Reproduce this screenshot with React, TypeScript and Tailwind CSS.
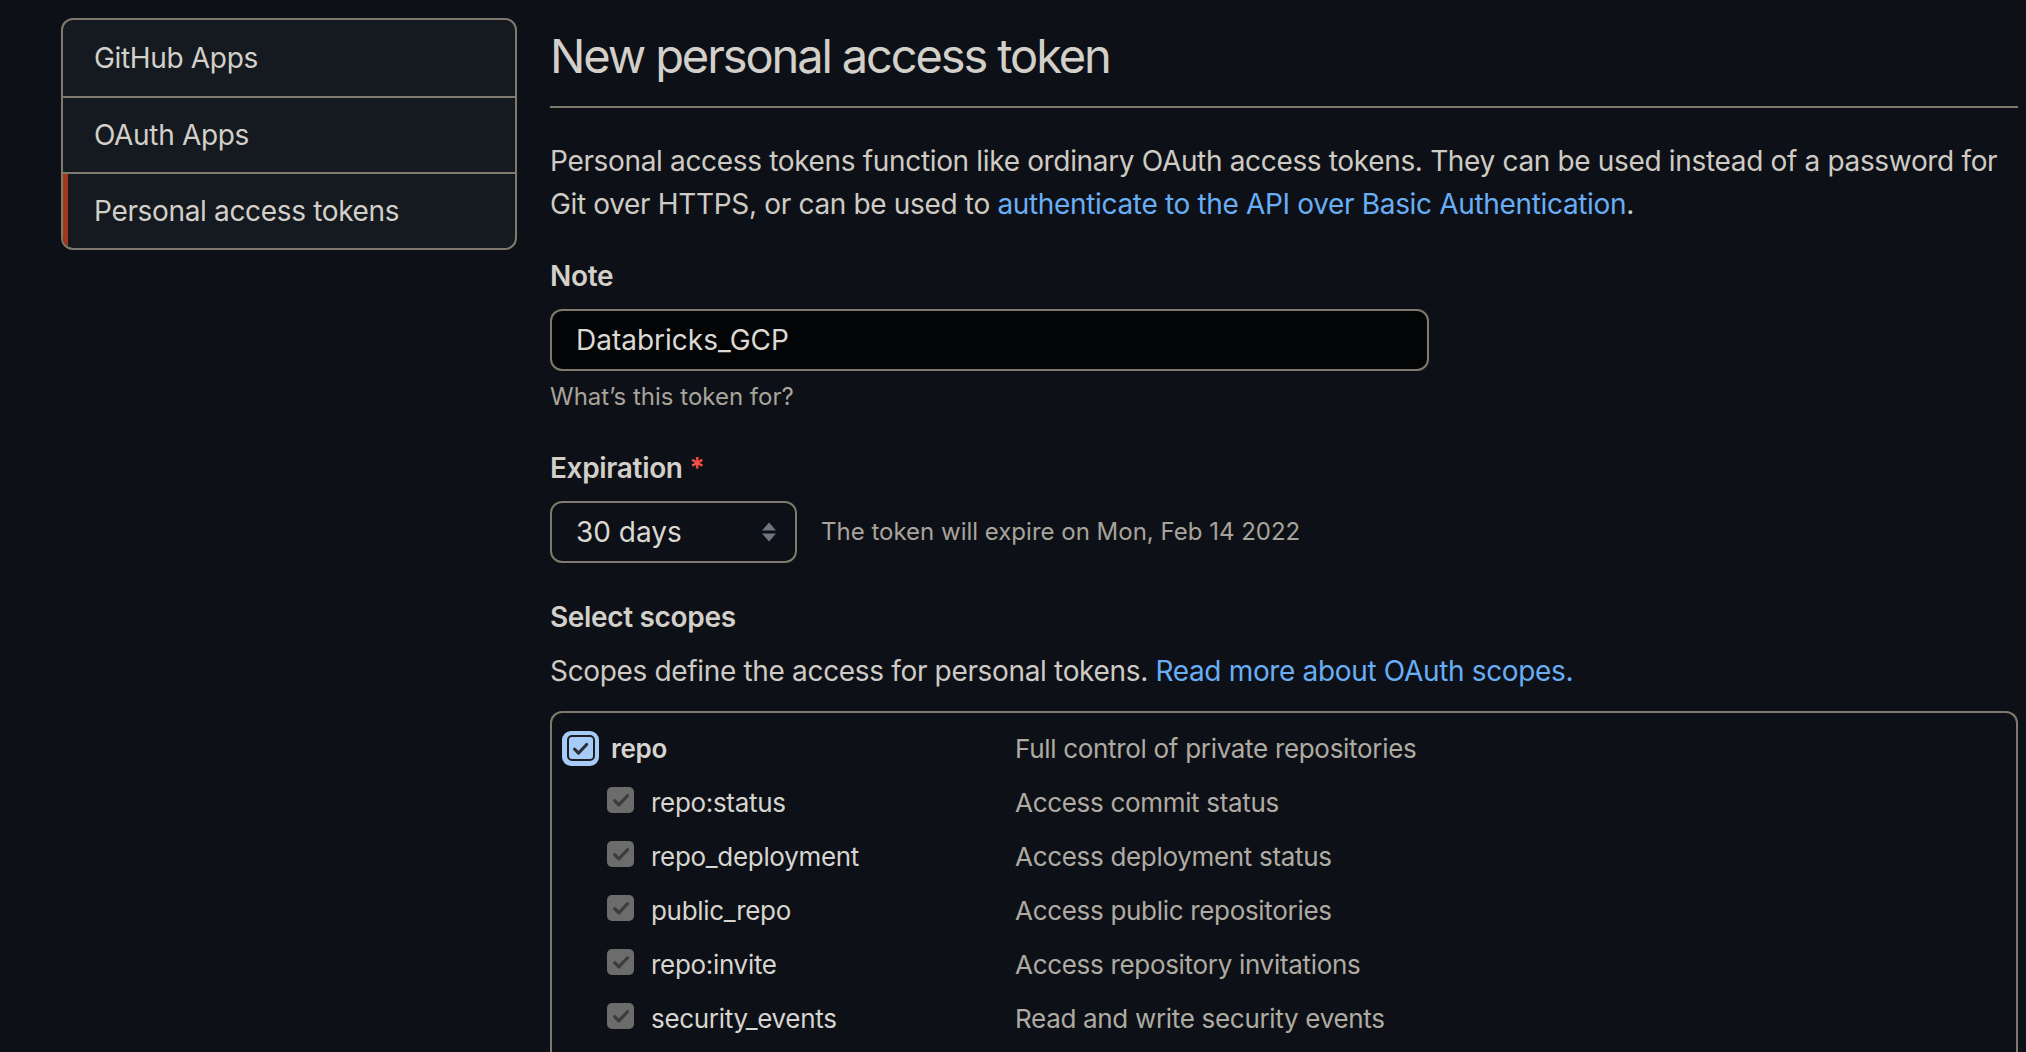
import React from "react";

const sideItems = [
    { label: "GitHub Apps", active: false },
    { label: "OAuth Apps", active: false },
    { label: "Personal access tokens", active: true },
];

const subScopes = [
    { name: "repo:status", desc: "Access commit status" },
    { name: "repo_deployment", desc: "Access deployment status" },
    { name: "public_repo", desc: "Access public repositories" },
    { name: "repo:invite", desc: "Access repository invitations" },
    { name: "security_events", desc: "Read and write security events" },
];

function Check({ color, size }: { color: string; size: number }) {
    return (
        <svg width={size} height={size} viewBox="0 0 16 16" fill="none">
            <path d="M3 8.6l3.3 3.3L13.2 4.6" stroke={color} strokeWidth="2.6" strokeLinecap="round" strokeLinejoin="round" />
        </svg>
    );
}

export default function App() {
    return (
        <div
            className="w-[2026px] h-[1052px] overflow-hidden bg-[#0d1117] text-[#cfcbc4] flex items-start gap-[33px] pl-[61px] pt-[18px]"
            style={{ fontFamily: "Inter, 'Noto Sans', sans-serif" }}
        >
            {/* sidebar */}
            <nav className="w-[456px] shrink-0 rounded-[12px] border-2 border-[#807a6e] bg-[#151a21] overflow-hidden">
                {sideItems.map((item, i) => (
                    <div
                        key={item.label}
                        className={
                            "relative h-[76px] flex items-center pl-[31px] text-[28px] tracking-[-0.012em] text-[#d3cfc9] " +
                            (i > 0 ? "border-t-2 border-[#807a6e]" : "")
                        }
                    >
                        {item.active && <span className="absolute left-0 top-0 bottom-0 w-[5px] bg-[#a2381a]" />}
                        {item.label}
                    </div>
                ))}
            </nav>

            {/* main */}
            <main className="w-[1468px] shrink-0">
                <div className="mt-[8px] pb-[20px] border-b-2 border-[#807a6e]">
                    <h1 className="text-[47px] leading-[60px] font-normal tracking-[-0.045em] text-[#d3cfc9]">
                        New personal access token
                    </h1>
                </div>

                <p className="mt-[32px] text-[28px] leading-[43px] tracking-[-0.012em] whitespace-nowrap">
                    Personal access tokens function like ordinary OAuth access tokens. They can be used instead of a password for
                    <br />
                    Git over HTTPS, or can be used to{" "}
                    <a className="text-[#69aef5]">authenticate to the API over Basic Authentication</a>.
                </p>

                <div className="mt-[29px] text-[28px] leading-[42px] font-semibold tracking-[-0.012em] text-[#d3cfc9]">Note</div>
                <div className="mt-[12px] w-[879px] h-[62px] rounded-[12px] border-2 border-[#807a6e] bg-[#030406] flex items-center pl-[24px] text-[28px] text-[#dcd9d4]">
                    Databricks_GCP
                </div>
                <div className="mt-[8px] text-[24px] leading-[36px] text-[#a9a49b]">What’s this token for?</div>

                <div className="mt-[32px] text-[28px] leading-[42px] font-semibold tracking-[-0.012em] text-[#d3cfc9]">
                    Expiration <span className="text-[#f85149]">*</span>
                </div>
                <div className="mt-[12px] flex items-center gap-[24px]">
                    <div className="w-[247px] h-[62px] rounded-[12px] border-2 border-[#807a6e] bg-[#0d1117] flex items-center justify-between pl-[24px] pr-[18px] text-[28px] text-[#dcd9d4]">
                        <span>30 days</span>
                        <svg width="16" height="24" viewBox="0 0 16 24">
                            <path d="M8 2.5L15 10.5H1z" fill="#6e7681" />
                            <path d="M1 13.5H15L8 21.5z" fill="#6e7681" />
                        </svg>
                    </div>
                    <span className="text-[24px] text-[#a9a49b]">The token will expire on Mon, Feb 14 2022</span>
                </div>

                <div className="mt-[33px] text-[28px] leading-[42px] font-semibold tracking-[-0.012em] text-[#d3cfc9]">Select scopes</div>
                <p className="mt-[12px] text-[28px] leading-[42px] tracking-[-0.012em]">
                    Scopes define the access for personal tokens. <a className="text-[#69aef5]">Read more about OAuth scopes.</a>
                </p>

                <div className="mt-[19px] rounded-t-[12px] border-2 border-b-0 border-[#807a6e] pt-[8px] pl-[10px] h-[400px]">
                    <div className="h-[54px] flex items-center">
                        <div className="w-[453px] flex items-center gap-[12px]">
                            <span className="w-[37px] h-[35px] rounded-[9px] bg-[#a6cbf7] flex items-center justify-center">
                                <span className="w-[28px] h-[26px] rounded-[5px] border-2 border-[#1b1f24] bg-[#a6cbf7] flex items-center justify-center">
                                    <Check color="#2b3036" size={19} />
                                </span>
                            </span>
                            <span className="text-[26px] font-semibold tracking-[-0.012em] text-[#d8d5d0]">repo</span>
                        </div>
                        <span className="text-[26px] tracking-[-0.012em] text-[#b0aba2]">Full control of private repositories</span>
                    </div>
                    {subScopes.map((s) => (
                        <div key={s.name} className="h-[54px] flex items-center">
                            <div className="w-[453px] flex items-center gap-[17px] pl-[45px]">
                                <span className="w-[27px] h-[26px] -mt-[4px] rounded-[5px] bg-[#6c6c6c] flex items-center justify-center">
                                    <Check color="#3c3c3c" size={20} />
                                </span>
                                <span className="text-[26px] tracking-[-0.012em] text-[#d8d5d0]">{s.name}</span>
                            </div>
                            <span className="text-[26px] tracking-[-0.012em] text-[#b0aba2]">{s.desc}</span>
                        </div>
                    ))}
                </div>
            </main>
        </div>
    );
}
